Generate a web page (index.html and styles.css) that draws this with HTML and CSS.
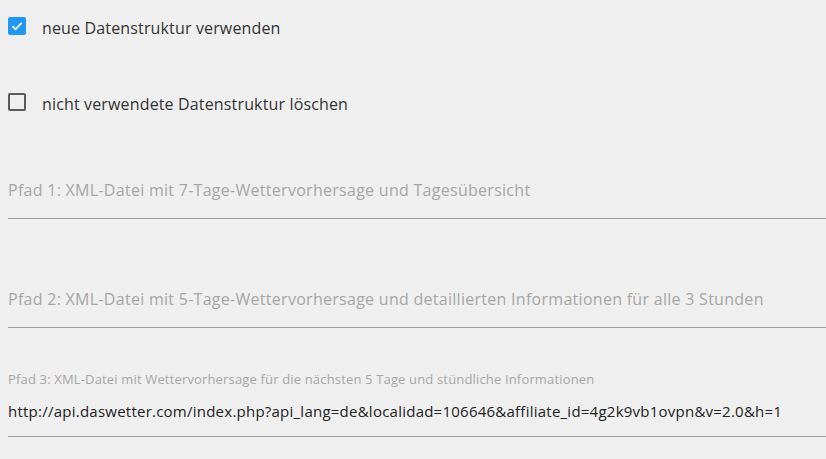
FILE: index.html
```html
<!DOCTYPE html>
<html lang="de">
<head>
<meta charset="utf-8">
<link rel="stylesheet" href="styles.css">
</head>
<body>
<div class="form">
  <label class="check">
    <span class="box checked">
      <svg viewBox="0 0 18 18" width="18" height="18"><path d="M4.4 9.2 L7.6 12.3 L13.6 5.8" fill="none" stroke="#fff" stroke-width="1.8"/></svg>
    </span>
    <span class="check-text">neue Datenstruktur verwenden</span>
  </label>
  <label class="check second">
    <span class="box"></span>
    <span class="check-text">nicht verwendete Datenstruktur löschen</span>
  </label>
  <div class="field first">
    <div class="placeholder">Pfad 1: XML-Datei mit 7-Tage-Wettervorhersage und Tagesübersicht</div>
  </div>
  <div class="field">
    <div class="placeholder">Pfad 2: XML-Datei mit 5-Tage-Wettervorhersage und detaillierten Informationen für alle 3 Stunden</div>
  </div>
  <div class="field filled">
    <div class="small-label">Pfad 3: XML-Datei mit Wettervorhersage für die nächsten 5 Tage und stündliche Informationen</div>
    <div class="value">http://api.daswetter.com/index.php?api_lang=de&amp;localidad=106646&amp;affiliate_id=4g2k9vb1ovpn&amp;v=2.0&amp;h=1</div>
  </div>
</div>
</body>
</html>
```
FILE: styles.css
```css
html, body {
  margin: 0;
  padding: 0;
  background: #efefef;
}
body {
  font-family: "Open Sans", "Noto Sans", sans-serif;
  width: 826px;
  height: 459px;
  overflow: hidden;
}
.form {
  display: flex;
  flex-direction: column;
  padding-left: 8px;
}
.check {
  display: flex;
  align-items: center;
  height: 18px;
  margin-top: 17px;
}
.check.second {
  margin-top: 58px;
}
.box {
  width: 18px;
  height: 18px;
  box-sizing: border-box;
  border: 2px solid #5a5a5a;
  border-radius: 2px;
  flex: none;
  display: flex;
}
.box.checked {
  background: #2196f3;
  border-color: #2196f3;
}
.box.checked svg {
  margin: -2px;
}
.check-text {
  margin-left: 16px;
  padding-top: 3px;
  font-size: 16px;
  letter-spacing: 0.15px;
  color: #333;
}
.field {
  height: 109px;
  border-bottom: 1px solid #9e9e9e;
  display: flex;
  flex-direction: column;
  justify-content: flex-end;
  box-sizing: border-box;
}
.field.first {
  height: 108px;
}
.placeholder {
  font-size: 16px;
  letter-spacing: 0.28px;
  color: #a6a6a6;
  line-height: 20px;
  margin-bottom: 18px;
}
.small-label {
  font-size: 13px;
  letter-spacing: 0.16px;
  color: #a6a6a6;
  line-height: 16px;
  margin-bottom: 14px;
}
.value {
  font-size: 15px;
  letter-spacing: 0.24px;
  color: #222;
  line-height: 20px;
  margin-bottom: 15px;
}
```
